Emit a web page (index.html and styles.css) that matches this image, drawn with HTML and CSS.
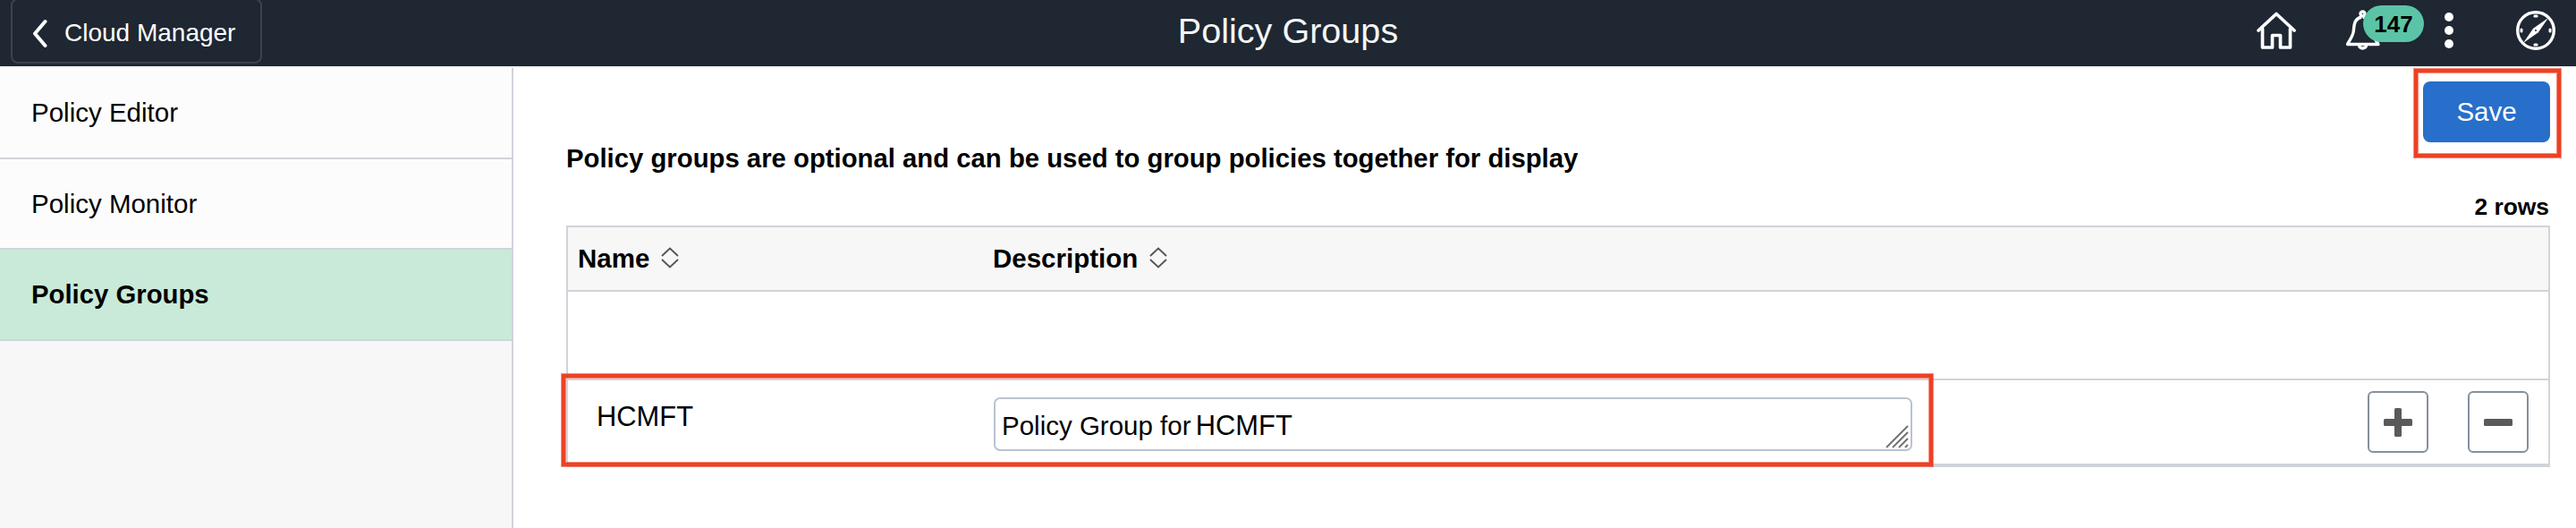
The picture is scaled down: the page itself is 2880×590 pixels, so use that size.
FILE: index.html
```html
<!DOCTYPE html>
<html lang="en">
<head>
<meta charset="utf-8">
<title>Policy Groups</title>
<link rel="stylesheet" href="styles.css">
</head>
<body>
<header class="banner">
  <a class="back">
    <svg class="back-icon" width="18" height="34" viewBox="0 0 18 34"><path d="M15.500 4 4 17.500 15.500 31" fill="none" stroke="#fff" stroke-width="4" stroke-linecap="round" stroke-linejoin="round"/></svg>
    <span>Cloud Manager</span>
  </a>
  <h1 class="title">Policy Groups</h1>
  <nav class="tools">
    <svg class="home" width="46" height="44" viewBox="0 0 46 44"><g fill="none" stroke="#fff" stroke-width="3.700" stroke-linecap="round" stroke-linejoin="round"><path d="M3 22 23 3.500 43 22"/><path d="M7.500 20V41H18.500V27.500H27.500V41H38.500V20"/></g></svg>
    <span class="alerts">
      <svg class="bell" width="40" height="46" viewBox="0 0 40 46"><g fill="none" stroke="#fff" stroke-width="3.400" stroke-linejoin="round"><path d="M18 8C11 10 10 15 9.500 22C9 30 5 33 2.500 38.500H37C34 33 30 30 29.500 22C29 15 27 10 20 8"/><circle cx="19.500" cy="4.500" r="2.500"/><path d="M15.500 39.500a4 3.500 0 0 0 8 0"/></g></svg>
      <span class="badge">147</span>
    </span>
    <svg class="dots" width="10" height="40" viewBox="0 0 10 40" fill="#fff"><circle cx="5" cy="5" r="5"/><circle cx="5" cy="20" r="5"/><circle cx="5" cy="35" r="5"/></svg>
    <svg class="compass" width="44" height="44" viewBox="0 0 44 44"><circle cx="22" cy="22" r="20.300" fill="none" stroke="#fff" stroke-width="3.400"/><path d="M36 8 24.800 24.200 8 36 19.200 19.800Z" fill="#fff"/><circle cx="22" cy="22" r="1" fill="#1e2732"/><path d="M20.900 6h2.200M20.900 38h2.200M6 20.900v2.200M38 20.900v2.200" stroke="#fff" stroke-width="3" stroke-linecap="round"/></svg>
  </nav>
</header>
<div class="page">
  <aside class="side">
    <a class="item">Policy Editor</a>
    <a class="item">Policy Monitor</a>
    <a class="item selected">Policy Groups</a>
  </aside>
  <main class="main">
    <div class="intro">
      <p class="lead">Policy groups are optional and can be used to group policies together for display</p>
      <div class="actions">
        <button class="save">Save</button>
        <p class="count">2 rows</p>
      </div>
    </div>
    <div class="grid">
      <div class="row head">
        <div class="name">Name <svg class="sort" width="20" height="24" viewBox="0 0 20 24"><path d="M1 10 10 1.500 19 10M1 14 10 22.500 19 14" fill="none" stroke="#555" stroke-width="1.900"/></svg></div>
        <div class="desc">Description <svg class="sort" width="20" height="24" viewBox="0 0 20 24"><path d="M1 10 10 1.500 19 10M1 14 10 22.500 19 14" fill="none" stroke="#555" stroke-width="1.900"/></svg></div>
      </div>
      <div class="row blank"></div>
      <div class="row entry">
        <div class="name value">HCMFT</div>
        <div class="field">
          <span>Policy Group for <span class="code">HCMFT</span></span>
          <svg class="grip" width="26" height="26" viewBox="0 0 26 26"><path d="M1 25 25 1M8 25 25 8M15 25 25 15M22 25l3-3" stroke="#737373" stroke-width="2"/></svg>
        </div>
        <div class="buttons">
          <button class="square"><svg width="32" height="32" viewBox="0 0 32 32" fill="#5a5a5a"><rect x="12" width="8" height="32" rx="1.500"/><rect y="12" width="32" height="8" rx="1.500"/></svg></button>
          <button class="square"><svg width="32" height="32" viewBox="0 0 32 32" fill="#5a5a5a"><rect y="12" width="32" height="8" rx="1.500"/></svg></button>
        </div>
      </div>
    </div>
  </main>
</div>
<div class="mark mark-save"></div>
<div class="mark mark-row"></div>
</body>
</html>
```
FILE: styles.css
```css
* { box-sizing: border-box; }
body {
  margin: 0;
  height: 590px;
  overflow: hidden;
  background: #fff;
  color: #000;
  font: 29.5px/34px "Liberation Sans", Arial, sans-serif;
}
h1, p { margin: 0; }
svg { display: block; flex: none; }
button { font: inherit; margin: 0; padding: 0; }

.banner {
  display: grid;
  grid-template-columns: 1fr auto 1fr;
  height: 76px;
  background: #1e2732;
  border-bottom: 2px solid #f0f0f0;
  color: #fff;
}
.back {
  display: flex;
  width: 281px;
  height: 73px;
  margin: -2px 0 0 12px;
  padding: 20px 0 0 21px;
  border: 2px solid #3b444d;
  border-radius: 8px;
  font-size: 28px;
}
.back-icon { margin-right: 19px; }
.title {
  color: #f4f5f6;
  font-size: 39.6px;
  font-weight: 400;
  line-height: 46px;
  padding-top: 11px;
}
.tools {
  display: flex;
  justify-content: flex-end;
  padding-right: 23px;
}
.home { margin-top: 12px; }
.alerts { position: relative; margin: 11px 0 0 54px; }
.badge {
  position: absolute;
  left: 20px;
  top: -5px;
  width: 68px;
  height: 41px;
  border-radius: 21px;
  background: #5bc4a7;
  color: #000;
  font-size: 26px;
  font-weight: 700;
  line-height: 43px;
  text-align: center;
}
.dots { margin: 14px 0 0 71px; }
.compass { margin: 12px 0 0 70px; }

.page { display: flex; height: 514px; }
.side {
  width: 574px;
  border-right: 2px solid #d0d4da;
  background: #f7f7f7;
}
.item {
  display: block;
  height: 101px;
  padding: 33px 36px 0 35px;
  background: #fcfcfc;
  border-bottom: 2px solid #d0d4da;
}
.item:first-child { height: 102px; }
.item.selected { height: 102px; background: #c9ead8; font-size: 29.3px; font-weight: 700; }

.main { flex: 1; padding: 0 29px 0 59px; }
.intro { display: flex; justify-content: space-between; height: 176px; }
.lead { padding-top: 84px; font-size: 29.3px; font-weight: 700; }
.actions { padding-top: 15px; text-align: right; }
.save {
  display: block;
  width: 142px;
  height: 68px;
  border: 0;
  border-radius: 8px;
  background: #276fca;
  color: #fff;
}
.count { margin-top: 55px; padding-right: 1px; font-size: 26.400px; font-weight: 700; }

.grid { border: 2px solid #d0d4da; border-bottom-width: 4px; }
.row { display: flex; }
.head { height: 72px; padding-top: 18px; background: #f7f7f7; border-bottom: 2px solid #d0d4da; font-size: 29.5px; font-weight: 700; }
.name { display: flex; width: 464px; padding-left: 11px; }
.desc { display: flex; padding-left: 11px; }
.sort { margin: 4px 0 0 13px; }
.blank { height: 99px; border-bottom: 2px solid #d0d4da; }
.entry { height: 93px; }
.value { width: 476px; padding: 24px 0 0 32px; font-size: 30.900px; }
.field {
  display: flex;
  justify-content: space-between;
  width: 1027px;
  height: 60px;
  margin-top: 19px;
  padding: 13px 2px 0 7px;
  border: 2px solid #bac3ce;
  border-radius: 7px;
}
.code { margin-left: -3px; font-size: 30.900px; }
.grip { margin-top: 16px; }
.buttons { display: flex; gap: 44px; margin: 12px 22px 0 auto; }
.square {
  display: flex;
  align-items: center;
  justify-content: center;
  width: 68px;
  height: 69px;
  border: 2px solid #84909b;
  border-radius: 6px;
  background: #fff;
}

.mark {
  position: absolute;
  border: 4px solid #ee4023;
  outline: 1px solid rgba(238, 64, 35, .6);
  box-shadow: inset 0 0 0 1px rgba(238, 64, 35, .6);
}
.mark-save { left: 2699px; top: 77px; width: 164px; height: 99px; }
.mark-row { left: 628px; top: 418px; width: 1533px; height: 103px; }
```
